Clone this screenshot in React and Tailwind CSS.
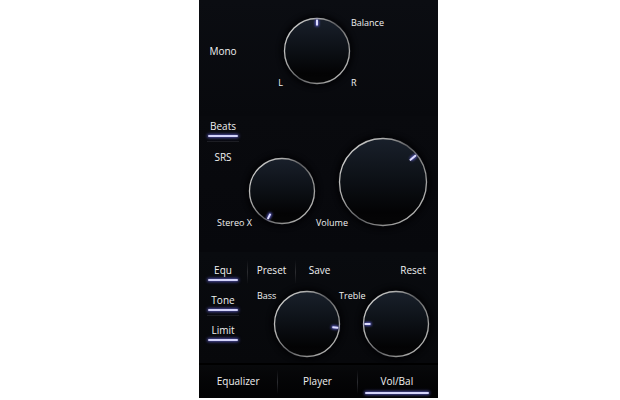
import React, { useId, useState } from 'react';
import { clsx } from 'clsx';

const Glow = ({ className }) => (
  <span className={clsx('block h-0.5 shrink-0 rounded-full bg-[#d3d3fa] shadow-[0_0_3px_1px_#4a4a9c]', className)} />
);

const Toggle = ({ children, defaultOn = false, rule = false }) => {
  const [on, setOn] = useState(defaultOn);

  return (
    <button
      type="button"
      aria-pressed={on}
      onClick={() => setOn(!on)}
      className="flex h-[30px] w-12 flex-col items-center pt-1 leading-3"
    >
      {children}
      <Glow className={clsx('mt-[3px] w-[30px]', !on && 'invisible')} />
      {rule && <span className="mt-1 h-px w-8 bg-[#1d1e24]" />}
    </button>
  );
};

const Knob = ({ id, label, angle, size = 'small' }) => {
  const uid = useId();
  const [value, setValue] = useState(angle);
  const large = size === 'large';
  const c = large ? 45 : 34;
  const r = large ? 43.5 : 32.5;
  const tick = large ? c - r + 1 : c - r + 1;

  return (
    <div className={clsx('relative shrink-0 rounded-full shadow-[0_0_5px_2px_#030305]', large ? 'size-[90px]' : 'size-[68px]')}>
      <svg viewBox={large ? '0 0 90 90' : '0 0 68 68'} className="block size-full overflow-visible" aria-hidden="true">
        <defs>
          <linearGradient id={`${uid}-face`} x1="0" y1="0" x2="0" y2="1">
            <stop offset="0" stopColor="#19202b" />
            <stop offset="0.45" stopColor="#0d1117" />
            <stop offset="0.85" stopColor="#030304" />
            <stop offset="1" stopColor="#050506" />
          </linearGradient>
          <linearGradient id={`${uid}-rim`} x1="0" y1="0.15" x2="1" y2="0.85">
            <stop offset="0" stopColor="#d6d6d4" />
            <stop offset="0.28" stopColor="#a9a9a8" />
            <stop offset="0.5" stopColor="#5c5d60" />
            <stop offset="0.72" stopColor="#8c8c8b" />
            <stop offset="1" stopColor="#c4c4c2" />
          </linearGradient>
          <filter id={`${uid}-blur`} x="-400%" y="-100%" width="900%" height="300%">
            <feGaussianBlur stdDeviation="1.2" />
          </filter>
        </defs>
        <circle cx={c} cy={c} r={r} fill={`url(#${uid}-face)`} stroke={`url(#${uid}-rim)`} strokeWidth="1.3" />
        <g transform={`rotate(${value} ${c} ${c})`}>
          <rect x={c - 2} y={tick} width="4" height="7" rx="1" fill="#5555b8" filter={`url(#${uid}-blur)`} />
          <rect x={c - 1} y={tick} width="2" height={large ? 8 : 6} rx="0.5" fill="#dcdcff" />
        </g>
      </svg>
      <input
        id={id}
        type="range"
        min="0"
        max="360"
        value={value}
        aria-label={label}
        onChange={(e) => setValue(Number(e.target.value))}
        className="absolute inset-0 size-full cursor-pointer opacity-0"
      />
    </div>
  );
};

const Divider = () => <span className="h-6 w-px bg-gradient-to-b from-transparent via-[#2b2c30] to-transparent" />;

const tabs = ['Equalizer', 'Player', 'Vol/Bal'];

const App = () => {
  const [tab, setTab] = useState('Vol/Bal');

  return (
    <div className="min-h-screen bg-white pr-[182px] pl-[199px]">
      <main className="bg-[#090a0f] font-['Open_Sans','Noto_Sans',sans-serif] text-[10px] font-medium text-[#f0f0f0]">
        {/* Balance */}
        <section className="flex items-start bg-gradient-to-b from-[#0b0d12] to-[#08090d] pt-[17px] pb-[27px]">
          <div className="pt-6">
            <Toggle>Mono</Toggle>
          </div>
          <div className="flex flex-1 items-end justify-end self-stretch">
            <span className="text-[9px] leading-3">L</span>
          </div>
          <Knob id="balance" label="Balance" angle={0} />
          <label htmlFor="balance" className="flex h-[72px] w-[87px] flex-col justify-between text-[9px] leading-3">
            <span>Balance</span>
            <span>R</span>
          </label>
        </section>

        {/* Effects and volume */}
        <section className="flex items-end bg-gradient-to-b from-[#090a0e] to-[#07080c] pb-[23px]">
          <div className="flex h-[113px] w-[49px] flex-col gap-px">
            <Toggle defaultOn rule>Beats</Toggle>
            <Toggle>SRS</Toggle>
            <label htmlFor="stereo" className="z-10 mt-auto pl-[18px] text-[9px] leading-3 whitespace-nowrap">Stereo X</label>
          </div>
          <div className="pb-1">
            <Knob id="stereo" label="Stereo X" angle={207} />
          </div>
          <div className="grid flex-1 items-end pr-2.5">
            <div className="col-start-1 row-start-1 justify-self-end pb-0.5">
              <Knob id="volume" label="Volume" angle={51} size="large" />
            </div>
            <label htmlFor="volume" className="z-10 col-start-1 row-start-1 justify-self-start text-[9px] leading-3">Volume</label>
          </div>
        </section>

        {/* Tone */}
        <section className="bg-gradient-to-b from-[#090b0f] to-[#07080b] pt-2 pb-[5px]">
          <div className="flex h-[30px] items-start">
            <Toggle defaultOn>Equ</Toggle>
            <Divider />
            <button type="button" className="w-[47px] pt-1 leading-3">Preset</button>
            <Divider />
            <button type="button" className="w-[47px] pt-1 leading-3">Save</button>
            <button type="button" className="mr-3 ml-auto pt-1 leading-3">Reset</button>
          </div>
          <div className="flex pr-2">
            <div className="flex flex-col">
              <Toggle defaultOn rule>Tone</Toggle>
              <Toggle defaultOn>Limit</Toggle>
            </div>
            <div className="-mr-0.5 ml-auto grid w-[84px]">
              <div className="col-start-1 row-start-1 justify-self-end">
                <Knob id="bass" label="Bass" angle={97} />
              </div>
              <label htmlFor="bass" className="z-10 col-start-1 row-start-1 self-start text-[9px] leading-3">Bass</label>
            </div>
            <div className="grid w-[91px]">
              <div className="col-start-1 row-start-1 justify-self-end">
                <Knob id="treble" label="Treble" angle={270} />
              </div>
              <label htmlFor="treble" className="z-10 col-start-1 row-start-1 self-start text-[9px] leading-3">Treble</label>
            </div>
          </div>
        </section>

        <nav className="flex h-[35px] items-center border-t-2 border-black bg-gradient-to-b from-[#08090b] to-[#020203] pr-0.5">
          {tabs.map((name, i) => (
            <React.Fragment key={name}>
              {i > 0 && <Divider />}
              <button
                type="button"
                onClick={() => setTab(name)}
                className="flex h-full flex-1 flex-col items-center pt-2.5 leading-3"
              >
                {name}
                {tab === name && <Glow className="mt-[5px] w-16" />}
              </button>
            </React.Fragment>
          ))}
        </nav>
      </main>
    </div>
  );
};

export default App;
